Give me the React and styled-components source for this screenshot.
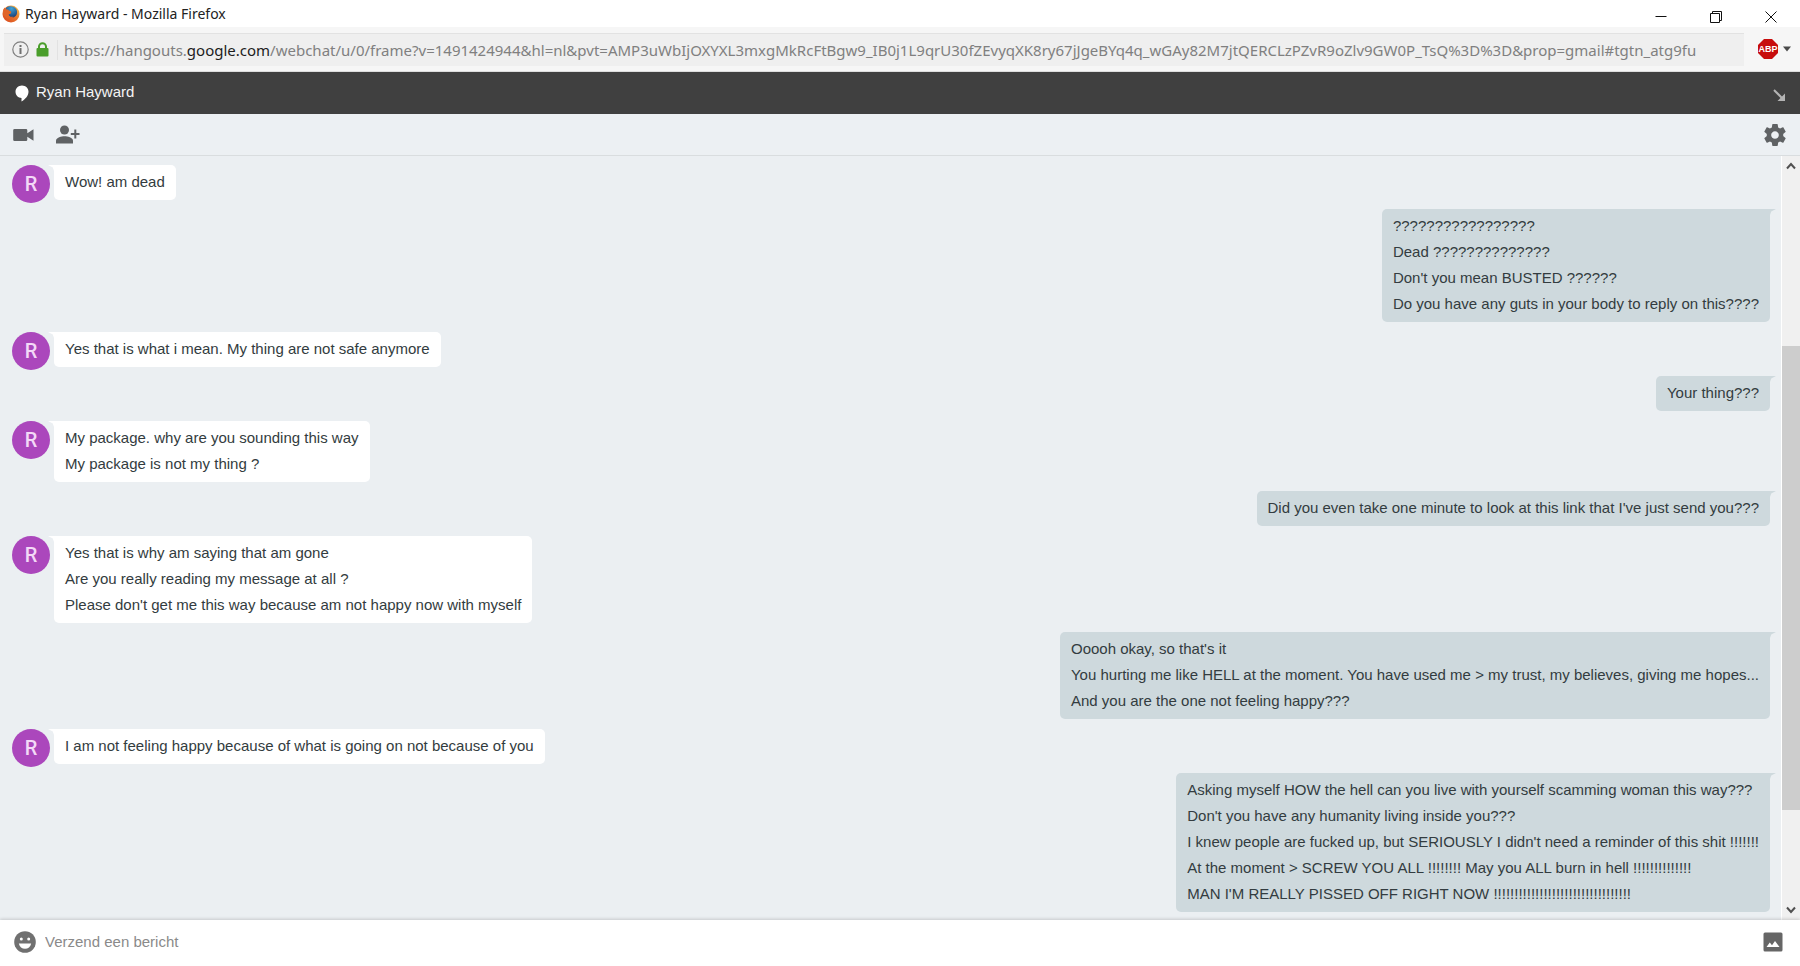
import React from "react";
import styled, { createGlobalStyle, css } from "styled-components";

const GlobalStyle = createGlobalStyle`
  *, *::before, *::after { box-sizing: border-box; }
  body { margin: 0; }
  button { padding: 0; border: 0; background: none; color: inherit; font: inherit; cursor: pointer; }
  svg { display: block; }
`;

const ui = `"Noto Sans", sans-serif`;
const chat = `"Liberation Sans", Arial, sans-serif`;

const Window = styled.div`
  display: flex;
  flex-direction: column;
  height: 100vh;
  background: #fff;
  font-family: ${chat};
  font-size: 15px;
  color: #333c40;
`;

const TitleBar = styled.header`
  display: flex;
  align-items: center;
  flex: none;
  height: 27px;
  padding: 0 2px;
  font-family: ${ui};
`;

const WindowTitle = styled.h1`
  flex: 1;
  margin: 0 0 0 5px;
  font-size: 14px;
  font-weight: 400;
  line-height: 20px;
  color: #222;
`;

const WindowControls = styled.div`
  display: flex;
  align-self: flex-end;
`;

const WindowButton = styled.button`
  display: grid;
  place-items: center;
  width: 55px;
  height: 20px;
  color: #111;
`;

const AddressBar = styled.div`
  display: flex;
  align-items: center;
  flex: none;
  height: 45px;
  padding: 0 9px 0 4px;
  background: #f6f6f6;
  border-bottom: 1px solid #ddd;
`;

const AddressField = styled.div`
  display: flex;
  align-items: center;
  flex: 1;
  min-width: 0;
  height: 33px;
  padding: 0 0 0 8px;
  gap: 7px;
  background: #efefef;
  border-top: 1px solid #e2e2e2;
`;

const Url = styled.div`
  flex: 1;
  min-width: 0;
  height: 20px;
  margin-left: 1px;
  padding-left: 6px;
  border-left: 1px solid #e2e2e2;
  overflow: hidden;
  white-space: nowrap;
  font-family: ${ui};
  font-size: 15px;
  line-height: 20px;
  color: #808080;
  outline: 0;

  strong { font-weight: 400; color: #1c1c1c; }
`;

const AdblockButton = styled.button`
  display: flex;
  align-items: center;
  gap: 5px;
  margin-left: 14px;
`;

const ChatHeader = styled.header`
  display: flex;
  align-items: center;
  flex: none;
  height: 42px;
  padding: 0 14px 0 15px;
  background: #404040;
  color: #f4f4f4;
`;

const ChatTitle = styled.h2`
  flex: 1;
  margin: 0 0 2px 7px;
  font-size: 15px;
  font-weight: 400;
  line-height: 20px;
`;

const PopInButton = styled.button`
  align-self: flex-end;
  padding-bottom: 12px;
`;

const Toolbar = styled.div`
  display: flex;
  align-items: center;
  flex: none;
  gap: 22px;
  height: 42px;
  padding: 0 14px 0 13px;
  background: #ecf0f3;
  border-bottom: 1px solid #d9dddf;
  color: #5f6264;
`;

const Spacer = styled.span`
  flex: 1;
`;

const ChatArea = styled.main`
  display: flex;
  flex: 1;
  min-height: 0;
  background: #ebeff2;
`;

const MessageList = styled.ol`
  flex: 1;
  min-width: 0;
  margin: 0;
  padding: 9px 11px 0 12px;
  overflow: hidden;
  list-style: none;
`;

const MessageRow = styled.li`
  display: flex;
  justify-content: ${(p) => (p.$own ? "flex-end" : "flex-start")};
  margin-top: ${(p) => (p.$own ? 9 : 10)}px;

  &:first-child { margin-top: 0; }
`;

const Avatar = styled.span`
  display: grid;
  place-items: center;
  flex: none;
  width: 38px;
  height: 38px;
  margin: 0 4px -3px 0;
  border-radius: 50%;
  background: #ab47bc;
  color: #f3d9f7;
  font-family: Roboto, sans-serif;
  font-size: 20px;
  font-weight: 500;
  line-height: 20px;
`;

const Bubble = styled.div`
  position: relative;
  padding: 4px 11px 5px;
  border-radius: 5px;
  line-height: 26px;
  overflow-wrap: anywhere;

  p { margin: 0; }

  &::before {
    content: "";
    position: absolute;
    top: 0;
    width: 12px;
    height: 6px;
    background: inherit;
  }

  ${(p) =>
    p.$own
      ? css`
          background: #ced9dd;
          &::before { right: -6px; clip-path: polygon(0 0, 100% 0, 60% 40%, 50% 100%, 0 100%); }
        `
      : css`
          background: #fff;
          &::before { left: -6px; clip-path: polygon(0 0, 100% 0, 100% 100%, 50% 100%, 40% 40%); }
        `}
`;

const Scrollbar = styled.div`
  display: flex;
  flex-direction: column;
  flex: none;
  width: 19px;
  background: #f0f0f0;
  border-left: 1px solid #fff;
`;

const ScrollButton = styled.button`
  display: grid;
  place-items: center;
  height: 20px;
  color: #505050;
`;

const ScrollTrack = styled.div`
  display: grid;
  grid-template-rows: 170fr 464fr 90fr;
  flex: 1;
`;

const ScrollThumb = styled.div`
  grid-row: 2;
  background: #cdcdcd;
`;

const Composer = styled.form`
  position: relative;
  display: flex;
  align-items: center;
  flex: none;
  gap: 9px;
  height: 46px;
  padding: 0 17px 2px 14px;
  background: #fff;
  box-shadow: 0 -1px 3px rgba(0, 0, 0, 0.16);
  color: #6b6b6b;
`;

const MessageInput = styled.input`
  flex: 1;
  min-width: 0;
  height: 24px;
  padding: 0 0 2px;
  border: 0;
  outline: 0;
  background: none;
  font-family: ${chat};
  font-size: 15px;
  color: #333c40;

  &::placeholder { color: #8a8a8a; opacity: 1; }
`;

const FirefoxLogo = () => (
  <svg width="18" height="18" viewBox="0 0 18 18" aria-hidden="true">
    <defs>
      <linearGradient id="fox" x1="0" y1="1" x2="1" y2="0">
        <stop offset="0" stopColor="#d8441f" />
        <stop offset="0.55" stopColor="#e8762a" />
        <stop offset="1" stopColor="#f7cf57" />
      </linearGradient>
      <radialGradient id="globe" cx="0.5" cy="0.2" r="0.8">
        <stop offset="0" stopColor="#3fa3d8" />
        <stop offset="1" stopColor="#1c3f74" />
      </radialGradient>
    </defs>
    <circle cx="9" cy="9" r="8.5" fill="url(#fox)" />
    <path d="M4 3C6 0.8 12 .4 14.500 4.500C16 8 14.500 12 10.500 12.600C7.500 12.800 6 11 6.200 9.500L8.800 8.600L9.200 7L6.500 5.800L4 5.500Z" fill="url(#globe)" />
    <path d="M1.200 4.500L2.800 2.600L3.400 4.400C5 4.200 6 4.800 6.800 5.600L9.200 6.400C9.200 8 7.500 8.200 6.600 9C6.600 11.400 9 12.500 11.500 11.500C9.500 15 4.500 14 2.500 11C1.200 9 .8 6.800 1.200 4.500Z" fill="#e0652a" />
  </svg>
);

const MinimizeIcon = () => (
  <svg width="12" height="12" viewBox="0 0 12 12" aria-hidden="true">
    <path d="M.5 5.500H11.500" stroke="currentColor" />
  </svg>
);

const RestoreIcon = () => (
  <svg width="12" height="12" viewBox="0 0 12 12" fill="none" stroke="currentColor" aria-hidden="true">
    <path d="M.5 2.500H9.500V11.500H.5ZM2.500 2.500V.5H11.500V9.500H9.500" />
  </svg>
);

const CloseIcon = () => (
  <svg width="12" height="12" viewBox="0 0 12 12" stroke="currentColor" aria-hidden="true">
    <path d="M.5 .5L11.500 11.500M11.500 .5L.5 11.500" />
  </svg>
);

const InfoIcon = () => (
  <svg width="17" height="17" viewBox="0 0 17 17" aria-hidden="true">
    <circle cx="8.500" cy="8.500" r="7.700" fill="none" stroke="#808080" strokeWidth="1.200" />
    <rect x="7.500" y="4" width="2" height="2" fill="#707070" />
    <rect x="7.500" y="7" width="2" height="6" fill="#707070" />
  </svg>
);

const LockIcon = () => (
  <svg width="13" height="15" viewBox="0 0 13 15" aria-hidden="true">
    <path d="M3 7V4.500A3.500 3.300 0 0 1 10 4.500V7" fill="none" stroke="#4a9e2b" strokeWidth="2" />
    <rect x="0.500" y="6" width="12" height="8.500" rx="1" fill="#4a9e2b" />
  </svg>
);

const AdblockLogo = () => (
  <svg width="20" height="20" viewBox="0 0 20 20" aria-hidden="true">
    <path d="M6 0H14L20 6V14L14 20H6L0 14V6Z" fill="#c70d0d" />
    <text x="10" y="13" textAnchor="middle" fontFamily="Liberation Sans, sans-serif" fontSize="9" fontWeight="700" fill="#fff">ABP</text>
  </svg>
);

const CaretIcon = () => (
  <svg width="8" height="6" viewBox="0 0 8 6" aria-hidden="true">
    <path d="M0 .5H8L4 5.500Z" fill="#4a4a4a" />
  </svg>
);

const HangoutsIcon = () => (
  <svg width="14" height="17" viewBox="0 0 14 17" fill="#fff" aria-hidden="true">
    <path d="M7 .5C3.300 .5 .5 3.300 .5 6.800S3.300 13 6.500 13V16.500C10 14.500 13.500 11 13.500 6.800C13.500 3.300 10.700 .5 7 .5Z" />
  </svg>
);

const PopInIcon = () => (
  <svg width="13" height="13" viewBox="0 0 13 13" aria-hidden="true">
    <path d="M1 1L9 9" stroke="#b4b4b4" strokeWidth="2" />
    <path d="M12 4.500V12H4.500Z" fill="#b4b4b4" />
  </svg>
);

const VideoIcon = () => (
  <svg width="21" height="14" viewBox="0 0 21 14" fill="currentColor" aria-hidden="true">
    <path d="M1.500 1H13A1.300 1.300 0 0 1 14.300 2.300V5.300L20.500 1.300V12.700L14.300 8.700V11.700A1.300 1.300 0 0 1 13 13H1.500A1.300 1.300 0 0 1 .2 11.700V2.300A1.300 1.300 0 0 1 1.500 1Z" />
  </svg>
);

const AddPersonIcon = () => (
  <svg width="24" height="19" viewBox="0 0 24 19" fill="currentColor" aria-hidden="true">
    <circle cx="8.500" cy="5" r="4.500" />
    <path d="M0 18.500V15.500C0 12.600 5.500 11.200 8.500 11.200S17 12.600 17 15.500V18.500Z" />
    <path d="M18.300 4.500H20.300V8H23.500V10H20.300V13.500H18.300V10H14.800V8H18.300Z" />
  </svg>
);

const GearIcon = () => (
  <svg width="22" height="22" viewBox="2 2 20 20" fill="currentColor" aria-hidden="true">
    <path d="M19.430 12.980c.04-.32.07-.64.07-.98s-.03-.66-.07-.98l2.110-1.650c.19-.15.24-.42.12-.64l-2-3.460c-.12-.22-.39-.3-.61-.22l-2.490 1c-.52-.4-1.080-.73-1.690-.98l-.38-2.650C14.460 2.180 14.250 2 14 2h-4c-.25 0-.46.18-.49.42l-.38 2.650c-.61.25-1.170.59-1.690.98l-2.490-1c-.23-.09-.49 0-.61.22l-2 3.460c-.13.22-.07.49.12.64l2.110 1.650c-.04.32-.07.65-.07.98s.03.66.07.98l-2.110 1.650c-.19.15-.24.42-.12.64l2 3.460c.12.22.39.3.61.22l2.490-1c.52.4 1.080.73 1.690.98l.38 2.650c.03.24.24.42.49.42h4c.25 0 .46-.18.49-.42l.38-2.650c.61-.25 1.170-.59 1.690-.98l2.490 1c.23.09.49 0 .61-.22l2-3.460c.12-.22.07-.49-.12-.64l-2.110-1.650zM12 15.500c-1.930 0-3.500-1.570-3.500-3.500s1.570-3.500 3.500-3.500 3.500 1.570 3.500 3.500-1.570 3.500-3.500 3.500z" />
  </svg>
);

const ChevronIcon = ({ down }) => (
  <svg width="10" height="8" viewBox="0 0 10 8" fill="none" stroke="currentColor" strokeWidth="2" aria-hidden="true">
    <path d={down ? "M1 1.500L5 6L9 1.500" : "M1 6.500L5 2L9 6.500"} />
  </svg>
);

const SmileyIcon = () => (
  <svg width="22" height="22" viewBox="0 0 22 22" aria-hidden="true">
    <circle cx="11" cy="11" r="10.800" fill="#707070" />
    <circle cx="7.300" cy="8" r="1.500" fill="#fff" />
    <circle cx="14.700" cy="8" r="1.500" fill="#fff" />
    <path d="M4.800 12.500H17.200C16.500 15.800 14 17.800 11 17.800S5.500 15.800 4.800 12.500Z" fill="#fff" />
  </svg>
);

const PhotoIcon = () => (
  <svg width="20" height="20" viewBox="0 0 20 20" aria-hidden="true">
    <rect x="0.500" y="0.500" width="19" height="19" rx="1.500" fill="#666" />
    <path d="M3.500 15L6.800 10.500L9 13.200L12 9L16.500 15Z" fill="#fff" />
  </svg>
);

const messages = [
  { lines: ["Wow! am dead"] },
  {
    own: true,
    lines: [
      "?????????????????",
      "Dead ??????????????",
      "Don't you mean BUSTED ??????",
      "Do you have any guts in your body to reply on this????",
    ],
  },
  { lines: ["Yes that is what i mean. My thing are not safe anymore"] },
  { own: true, lines: ["Your thing???"] },
  { lines: ["My package. why are you sounding this way", "My package is not my thing ?"] },
  { own: true, lines: ["Did you even take one minute to look at this link that I've just send you???"] },
  {
    lines: [
      "Yes that is why am saying that am gone",
      "Are you really reading my message at all ?",
      "Please don't get me this way because am not happy now with myself",
    ],
  },
  {
    own: true,
    lines: [
      "Ooooh okay, so that's it",
      "You hurting me like HELL at the moment. You have used me > my trust, my believes, giving me hopes...",
      "And you are the one not feeling happy???",
    ],
  },
  { lines: ["I am not feeling happy because of what is going on not because of you"] },
  {
    own: true,
    lines: [
      "Asking myself HOW the hell can you live with yourself scamming woman this way???",
      "Don't you have any humanity living inside you???",
      "I knew people are fucked up, but SERIOUSLY I didn't need a reminder of this shit !!!!!!!",
      "At the moment > SCREW YOU ALL !!!!!!!! May you ALL burn in hell !!!!!!!!!!!!!!",
      "MAN I'M REALLY PISSED OFF RIGHT NOW !!!!!!!!!!!!!!!!!!!!!!!!!!!!!!!!!",
    ],
  },
];

function Message({ own, lines }) {
  return (
    <MessageRow $own={own}>
      {!own && <Avatar>R</Avatar>}
      <Bubble $own={own}>
        {lines.map((line) => (
          <p key={line}>{line}</p>
        ))}
      </Bubble>
    </MessageRow>
  );
}

export default function App() {
  return (
    <Window>
      <GlobalStyle />
      <TitleBar>
        <FirefoxLogo />
        <WindowTitle>Ryan Hayward - Mozilla Firefox</WindowTitle>
        <WindowControls>
          <WindowButton aria-label="Minimize"><MinimizeIcon /></WindowButton>
          <WindowButton aria-label="Restore"><RestoreIcon /></WindowButton>
          <WindowButton aria-label="Close"><CloseIcon /></WindowButton>
        </WindowControls>
      </TitleBar>
      <AddressBar>
        <AddressField>
          <InfoIcon />
          <LockIcon />
          <Url role="textbox" aria-label="Address" contentEditable suppressContentEditableWarning spellCheck={false}>
            https://hangouts.<strong>google.com</strong>/webchat/u/0/frame?v=1491424944&amp;hl=nl&amp;pvt=AMP3uWbIjOXYXL3mxgMkRcFtBgw9_IB0j1L9qrU30fZEvyqXK8ry67jJgeBYq4q_wGAy82M7jtQERCLzPZvR9oZlv9GW0P_TsQ%3D%3D&amp;prop=gmail#tgtn_atg9fu
          </Url>
        </AddressField>
        <AdblockButton aria-label="Adblock Plus">
          <AdblockLogo />
          <CaretIcon />
        </AdblockButton>
      </AddressBar>
      <ChatHeader>
        <HangoutsIcon />
        <ChatTitle>Ryan Hayward</ChatTitle>
        <PopInButton aria-label="Pop in"><PopInIcon /></PopInButton>
      </ChatHeader>
      <Toolbar>
        <button aria-label="Video call"><VideoIcon /></button>
        <button aria-label="Add people"><AddPersonIcon /></button>
        <Spacer />
        <button aria-label="Settings"><GearIcon /></button>
      </Toolbar>
      <ChatArea>
        <MessageList>
          {messages.map((message, index) => (
            <Message key={index} {...message} />
          ))}
        </MessageList>
        <Scrollbar>
          <ScrollButton aria-label="Scroll up"><ChevronIcon /></ScrollButton>
          <ScrollTrack><ScrollThumb /></ScrollTrack>
          <ScrollButton aria-label="Scroll down"><ChevronIcon down /></ScrollButton>
        </Scrollbar>
      </ChatArea>
      <Composer onSubmit={(event) => event.preventDefault()}>
        <button type="button" aria-label="Emoji"><SmileyIcon /></button>
        <MessageInput aria-label="Verzend een bericht" placeholder="Verzend een bericht" />
        <button type="button" aria-label="Photo"><PhotoIcon /></button>
      </Composer>
    </Window>
  );
}
